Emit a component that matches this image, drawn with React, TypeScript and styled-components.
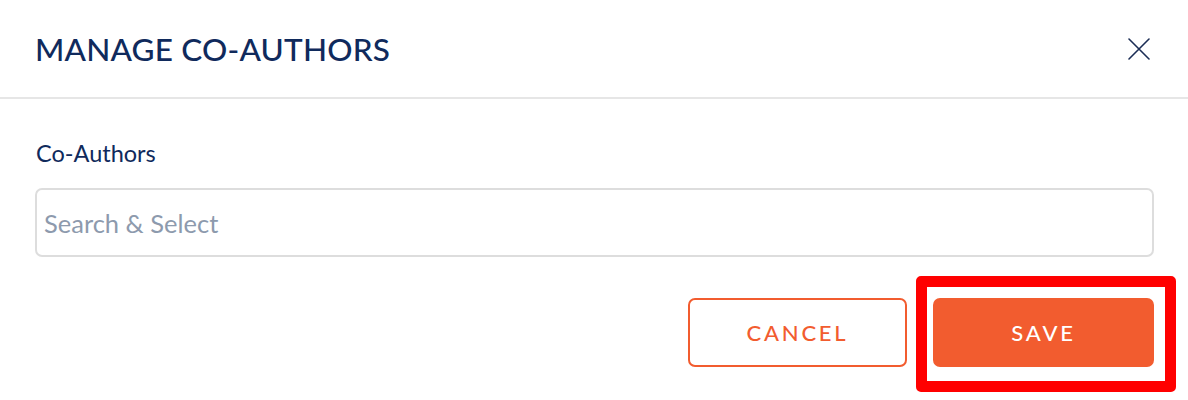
import React from "react";
import styled, { createGlobalStyle } from "styled-components";

const GlobalStyle = createGlobalStyle`
  html, body {
    margin: 0;
    padding: 0;
    background: #ffffff;
  }
  body {
    font-family: "Lato", "Liberation Sans", sans-serif;
  }
`;

const App = () => {
  return (
    <Modal>
      <GlobalStyle />
      <Header>
        <Title>MANAGE CO-AUTHORS</Title>
        <CloseButton aria-label="Close">
          <svg width="22" height="22" viewBox="0 0 22 22">
            <path d="M1 1 L21 21 M21 1 L1 21" stroke="#1b2d55" strokeWidth="1.6" strokeLinecap="round" />
          </svg>
        </CloseButton>
      </Header>
      <Body>
        <Label>Co-Authors</Label>
        <SearchInput placeholder="Search & Select" />
        <Footer>
          <Button variant="outline">CANCEL</Button>
          <Highlight>
            <Button variant="solid">SAVE</Button>
          </Highlight>
        </Footer>
      </Body>
    </Modal>
  );
};

/*-----------Styles----------------*/
const Modal = styled.div`
  width: 1188px;
  height: 400px;
  background: #fff;
  box-sizing: border-box;
  overflow: hidden;
`;

const Header = styled.div`
  display: flex;
  align-items: center;
  justify-content: space-between;
  height: 99px;
  padding: 0 38px 0 35px;
  box-sizing: border-box;
  border-bottom: 2px solid #e6e6e6;
`;

const Title = styled.h1`
  margin: 0;
  font-size: 31.5px;
  font-weight: 500;
  color: #102a5c;
  letter-spacing: 0.2px;
`;

const CloseButton = styled.button`
  border: none;
  background: none;
  padding: 0;
  display: flex;
  cursor: pointer;
`;

const Body = styled.div`
  padding: 39px 34px 0 35px;
`;

const Label = styled.div`
  font-size: 23.5px;
  color: #102a5c;
  margin-left: 1px;
  line-height: 30px;
`;

const SearchInput = styled.input`
  display: block;
  width: 100%;
  height: 69px;
  margin-top: 20px;
  box-sizing: border-box;
  border: 2px solid #dddddd;
  border-radius: 7px;
  padding: 0 7px;
  font-family: "Lato", "Liberation Sans", sans-serif;
  font-size: 25.5px;
  color: #102a5c;
  outline: none;

  &::placeholder {
    color: #8d9aad;
  }
`;

const Footer = styled.div`
  display: flex;
  justify-content: flex-end;
  gap: 26px;
  margin-top: 41px;
`;

const Button = styled.button<{ variant: "outline" | "solid" }>`
  width: ${(p) => (p.variant === "solid" ? "221px" : "219px")};
  height: 69px;
  border-radius: 7px;
  font-family: "Lato", "Liberation Sans", sans-serif;
  font-size: 22px;
  font-weight: 500;
  letter-spacing: 2.8px;
  cursor: pointer;
  border: 2px solid #f25c2f;
  background: ${(p) => (p.variant === "solid" ? "#f25c2f" : "#ffffff")};
  color: ${(p) => (p.variant === "solid" ? "#ffffff" : "#f25c2f")};
`;

const Highlight = styled.div`
  position: relative;
  display: flex;

  &::after {
    content: "";
    position: absolute;
    top: -22px;
    left: -17px;
    right: -22px;
    bottom: -25px;
    border: 11px solid #ff0000;
    border-radius: 5px;
    pointer-events: none;
  }
`;

export default App;
